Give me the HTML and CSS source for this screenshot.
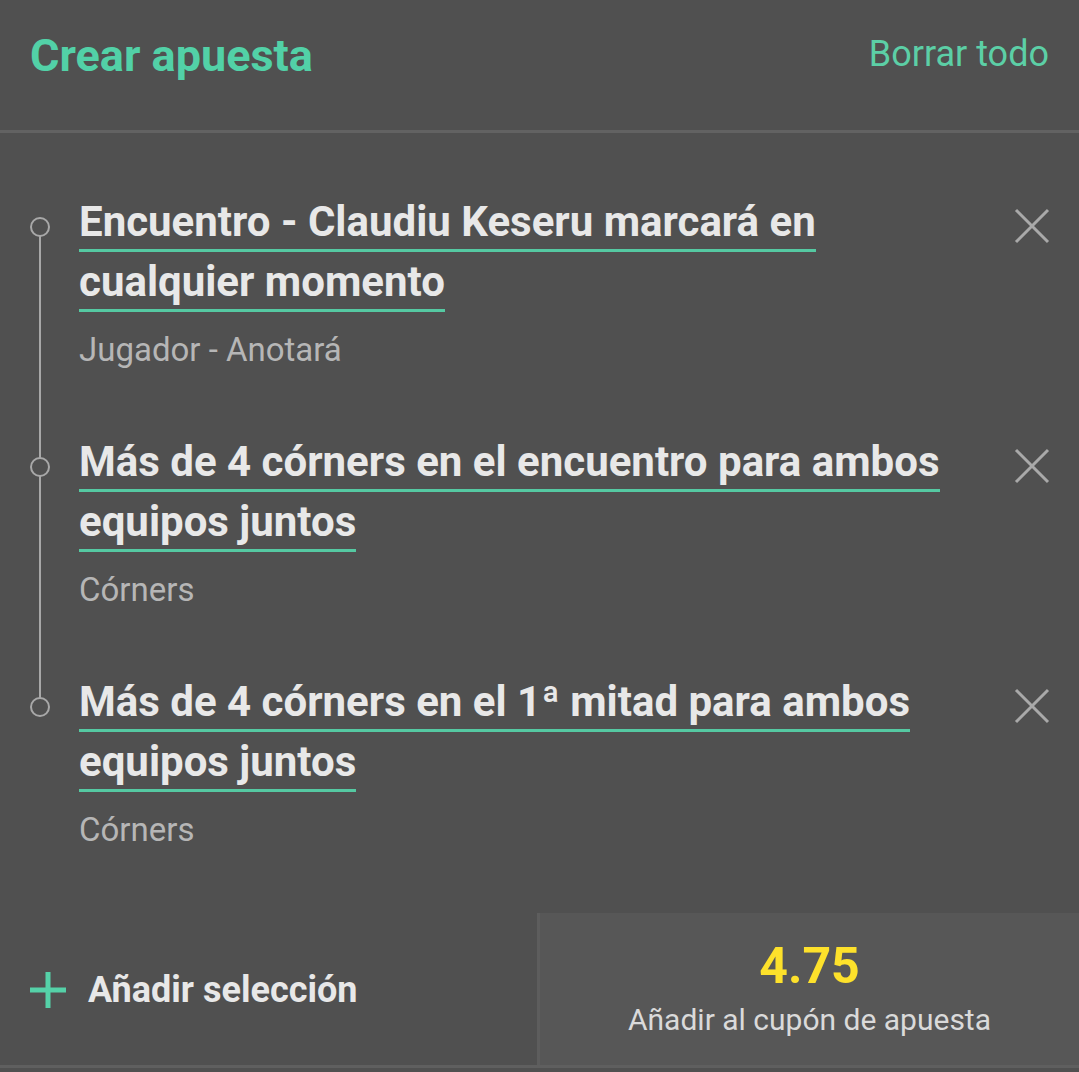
FILE: index.html
```html
<!DOCTYPE html>
<html lang="es">
<head>
<meta charset="utf-8">
<title>Crear apuesta</title>
<link rel="stylesheet" href="styles.css">
</head>
<body>
<div class="panel">
  <header class="header">
    <h1 class="title">Crear apuesta</h1>
    <a class="clear">Borrar todo</a>
  </header>

  <ul class="list">
    <li class="item">
      <div class="body">
        <div class="sel"><span class="u">Encuentro - Claudiu Keseru marcará en cualquier momento</span></div>
        <div class="market">Jugador - Anotará</div>
      </div>
      <button class="close" aria-label="Eliminar"><svg viewBox="0 0 36 36" width="36" height="36"><path d="M2 2 L34 34 M34 2 L2 34" /></svg></button>
    </li>
    <li class="item">
      <div class="body">
        <div class="sel"><span class="u">Más de 4 córners en el encuentro para ambos equipos juntos</span></div>
        <div class="market">Córners</div>
      </div>
      <button class="close" aria-label="Eliminar"><svg viewBox="0 0 36 36" width="36" height="36"><path d="M2 2 L34 34 M34 2 L2 34" /></svg></button>
    </li>
    <li class="item">
      <div class="body">
        <div class="sel"><span class="u">Más de 4 córners en el 1ª mitad para ambos equipos juntos</span></div>
        <div class="market">Córners</div>
      </div>
      <button class="close" aria-label="Eliminar"><svg viewBox="0 0 36 36" width="36" height="36"><path d="M2 2 L34 34 M34 2 L2 34" /></svg></button>
    </li>
  </ul>

  <footer class="footer">
    <div class="add">
      <svg class="plus" viewBox="0 0 36 36" width="36" height="36"><path d="M18 0 V36 M0 18 H36" /></svg>
      <span class="add-label">Añadir selección</span>
    </div>
    <div class="coupon">
      <div class="odds">4.75</div>
      <div class="coupon-label">Añadir al cupón de apuesta</div>
    </div>
  </footer>
</div>
</body>
</html>
```

FILE: styles.css
```css
html, body {
  margin: 0;
  padding: 0;
  background: #505050;
}
body {
  font-family: Roboto, "Liberation Sans", sans-serif;
  color: #e6e6e6;
}
.panel {
  width: 1079px;
}
.header {
  height: 133px;
  box-sizing: border-box;
  display: flex;
  justify-content: space-between;
  align-items: center;
  padding: 0 30px 19px 30px;
  border-bottom: 3px solid #626262;
}
.title {
  margin: 0;
  font-size: 45px;
  font-weight: 700;
  color: #52d1a7;
}
.clear {
  font-size: 36px;
  font-weight: 400;
  color: #5ccfa6;
  position: relative;
  top: -2px;
}
.list {
  list-style: none;
  margin: 0;
  padding: 59px 0 0 0;
  position: relative;
}
.list::before {
  content: "";
  position: absolute;
  left: 39px;
  width: 2px;
  top: 96px;
  height: 480px;
  background: #a8a8a8;
}
.item {
  position: relative;
  display: flex;
  align-items: flex-start;
  padding: 0 30px 62px 79px;
}
.item::before {
  content: "";
  position: absolute;
  left: 30px;
  top: 25px;
  width: 16px;
  height: 16px;
  border: 2px solid #a8a8a8;
  border-radius: 50%;
  background: #505050;
}
.body {
  flex: 1;
  padding-right: 40px;
}
.sel {
  font-size: 42px;
  font-weight: 700;
  line-height: 60px;
  color: #e8e8e8;
}
.u {
  border-bottom: 3px solid #55c9a2;
  padding-bottom: 3px;
}
.market {
  margin-top: 18px;
  font-size: 33px;
  line-height: 40px;
  color: #b6b6b6;
}
.close {
  background: none;
  border: 0;
  padding: 0;
  margin-top: 16px;
  margin-right: -1px;
  width: 36px;
  height: 36px;
}
.close svg {
  display: block;
  stroke: #a9a9a9;
  stroke-width: 3;
  fill: none;
}
.footer {
  margin-top: 1px;
  display: flex;
  border-bottom: 3px solid #5f5f5f;
}
.add {
  width: 537px;
  display: flex;
  align-items: center;
  padding-left: 30px;
  box-sizing: border-box;
  gap: 22px;
  padding-top: 2px;
}
.plus {
  display: block;
  stroke: #55d1a8;
  stroke-width: 5;
  fill: none;
}
.add-label {
  font-size: 36px;
  font-weight: 700;
  color: #e8e8e8;
}
.coupon {
  flex: 1;
  height: 152px;
  box-sizing: border-box;
  background: #575757;
  border-left: 3px solid #5d5d5d;
  display: flex;
  flex-direction: column;
  align-items: center;
  justify-content: center;
}
.odds {
  font-size: 50px;
  font-weight: 700;
  line-height: 56px;
  color: #fde12b;
}
.coupon-label {
  font-size: 30px;
  line-height: 40px;
  color: #dadada;
  margin-top: 6px;
}
```
